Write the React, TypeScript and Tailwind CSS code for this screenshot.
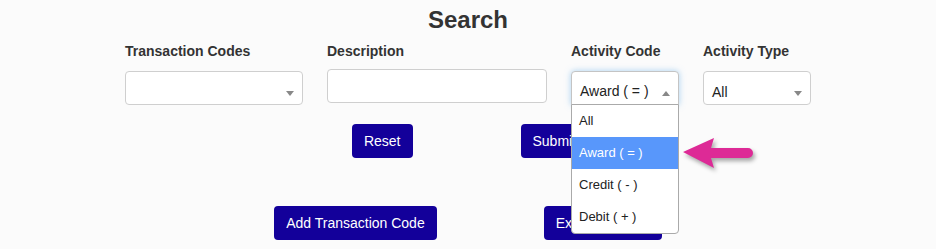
import React from "react";

function Arrow({ up = false }: { up?: boolean }) {
  return up ? (
    <span className="absolute right-[8px] top-[19px] h-0 w-0 border-x-[4px] border-b-[5px] border-x-transparent border-b-[#888]" />
  ) : (
    <span className="absolute right-[8px] top-[19px] h-0 w-0 border-x-[4px] border-t-[5px] border-x-transparent border-t-[#888]" />
  );
}

function Btn({ children }: { children: React.ReactNode }) {
  return (
    <button className="h-[34px] rounded-[4px] bg-[#13009a] px-3 text-sm leading-5 text-white">
      {children}
    </button>
  );
}

export default function App() {
  const items = ["All", "Award ( = )", "Credit ( - )", "Debit ( + )"];
  return (
    <div className="relative h-[249px] w-[936px] overflow-hidden bg-[#fbfbfb] font-['Liberation_Sans',Arial,sans-serif] text-[#333]">
      <h1 className="pt-1 text-center text-2xl font-bold leading-8 text-[#333]">Search</h1>

      <div className="mt-[5px] flex justify-center gap-6">
        <div className="flex w-[178px] flex-col">
          <label className="h-5 text-sm font-bold leading-5">Transaction Codes</label>
          <div className="relative mt-[10px] h-[34px] rounded-[4px] border border-[#cfcfcf] bg-white">
            <Arrow />
          </div>
        </div>

        <div className="flex w-[220px] flex-col">
          <label className="h-5 text-sm font-bold leading-5">Description</label>
          <input className="mt-[8px] h-[34px] rounded-[4px] border border-[#cfcfcf] bg-white px-2 text-sm outline-none" />
        </div>

        <div className="relative z-10 flex w-[108px] flex-col">
          <label className="h-5 text-sm font-bold leading-5">Activity Code</label>
          <div className="relative mt-[10px] h-[34px] rounded-t-[4px] border border-[#c4c4c4] bg-white pl-2 pt-[9px] text-sm leading-5 text-[#222] shadow-[0_0_6px_rgba(102,175,233,0.55)]">
            Award ( = )
            <Arrow up />
          </div>
          <ul className="absolute left-0 top-[63px] w-[108px] rounded-b-[4px] border border-[#aaa] bg-white text-[13px] leading-5 text-[#222]">
            {items.map((it, i) => (
              <li
                key={it}
                className={
                  i === 1
                    ? "flex h-8 items-center bg-[#5897fb] pl-[7px] text-white"
                    : "flex h-8 items-center pl-[7px]"
                }
              >
                {it}
              </li>
            ))}
          </ul>
        </div>

        <div className="flex w-[108px] flex-col">
          <label className="h-5 text-sm font-bold leading-5">Activity Type</label>
          <div className="relative mt-[10px] h-[34px] rounded-[4px] border border-[#cfcfcf] bg-white pl-2 pt-[10px] text-sm leading-5 text-[#222]">
            All
            <Arrow />
          </div>
        </div>
      </div>

      <div className="mt-[19px] flex justify-center gap-[108px] pl-[4px]">
        <Btn>Reset</Btn>
        <Btn>Submit</Btn>
      </div>

      <div className="mt-12 flex justify-center gap-[107px]">
        <Btn>Add Transaction Code</Btn>
        <Btn>Export to Excel</Btn>
      </div>

      <svg
        className="absolute left-[680px] top-[134px] z-20"
        width="80"
        height="40"
        viewBox="0 0 80 40"
        style={{ filter: "drop-shadow(2px 3px 2px rgba(0,0,0,0.35))" }}
      >
        <path
          d="M3 18 L34 4 L31 14 L68 14 A5 5 0 0 1 68 24 L31 24 L34 34 Z"
          fill="#dd2a96"
        />
      </svg>
    </div>
  );
}
